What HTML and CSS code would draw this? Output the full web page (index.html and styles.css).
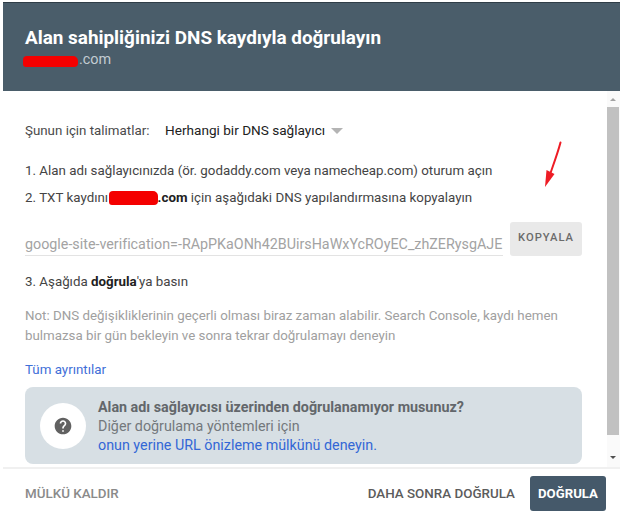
FILE: index.html
```html
<!DOCTYPE html>
<html lang="tr">
<head>
<meta charset="utf-8">
<title>Alan sahipliğinizi DNS kaydıyla doğrulayın</title>
<link rel="stylesheet" href="styles.css">
</head>
<body>
<div class="dialog">
  <header class="head">
    <h1 class="title">Alan sahipliğinizi DNS kaydıyla doğrulayın</h1>
    <div class="sub"><span class="redact redact-sub"></span>.com</div>
  </header>
  <div class="middle">
    <main class="content">
      <div class="instr">
        <span class="instr-label">Şunun için talimatlar:</span>
        <span class="instr-value">Herhangi bir DNS sağlayıcı</span>
        <span class="caret"></span>
      </div>
      <p class="step step-1">1. Alan adı sağlayıcınızda (ör. godaddy.com veya namecheap.com) oturum açın</p>
      <p class="step step-2">2. TXT kaydını <span class="redact redact-inline"></span><b>.com</b> için aşağıdaki DNS yapılandırmasına kopyalayın</p>
      <div class="copy-row">
        <div class="token">google-site-verification=-RApPKaONh42BUirsHaWxYcROyEC_zhZERysgAJE</div>
        <button class="copy-btn">KOPYALA</button>
      </div>
      <p class="step step-3">3. Aşağıda <b>doğrula</b>'ya basın</p>
      <p class="note">Not: DNS değişikliklerinin geçerli olması biraz zaman alabilir. Search Console, kaydı hemen bulmazsa bir gün bekleyin ve sonra tekrar doğrulamayı deneyin</p>
      <a class="details">Tüm ayrıntılar</a>
      <section class="help">
        <div class="help-circle">
          <svg width="20" height="20" viewBox="0 0 24 24"><path fill="#616161" d="M12 2C6.48 2 2 6.48 2 12s4.48 10 10 10 10-4.48 10-10S17.52 2 12 2zm1 17h-2v-2h2v2zm2.07-7.75l-.9.92C13.45 12.9 13 13.5 13 15h-2v-.5c0-1.1.45-2.1 1.17-2.83l1.24-1.26c.37-.36.59-.86.59-1.41 0-1.1-.9-2-2-2s-2 .9-2 2H8c0-2.21 1.79-4 4-4s4 1.79 4 4c0 .88-.36 1.68-.93 2.25z"/></svg>
        </div>
        <div class="help-text">
          <div class="help-title">Alan adı sağlayıcısı üzerinden doğrulanamıyor musunuz?</div>
          <div class="help-line">Diğer doğrulama yöntemleri için</div>
          <a class="help-link">onun yerine URL önizleme mülkünü deneyin.</a>
        </div>
      </section>
    </main>
    <div class="scrollbar">
      <span class="arrow arrow-up"></span>
      <span class="thumb"></span>
      <span class="arrow arrow-down"></span>
    </div>
    <svg class="red-arrow" width="24" height="48" viewBox="0 0 24 48"><path d="M18.500 2.500 C16 12 12 23 8.500 33" stroke="#ee1c25" stroke-width="2" fill="none" stroke-linecap="round"/><path d="M3 47 L4.500 30 L12.500 34 Z" fill="#ee1c25"/></svg>
  </div>
  <footer class="foot">
    <button class="ghost remove">MÜLKÜ KALDIR</button>
    <button class="ghost later">DAHA SONRA DOĞRULA</button>
    <button class="verify">DOĞRULA</button>
  </footer>
</div>
</body>
</html>
```
FILE: styles.css
```css
* { box-sizing: border-box; }
html, body { margin: 0; padding: 0; background: #fff; }
body { width: 626px; height: 519px; overflow: hidden; font-family: Roboto, "Liberation Sans", sans-serif; }
.dialog { width: 617px; margin-left: 3px; padding-top: 2px; display: flex; flex-direction: column; }
.head { height: 89px; background: #4a5d6a; border-top: 1px solid #2f3d47; padding: 22px 22px 0; }
.title { margin: 0; font-size: 18.900px; line-height: 25px; font-weight: 700; color: #fff; }
.sub { font-size: 14.400px; line-height: 20px; color: #c3ccd2; display: flex; align-items: center; }
.redact { display: inline-block; background: #f40000; border-radius: 4px 5px 4px 3px; }
.redact-sub { width: 55px; height: 11px; margin: 2px 1px 0 -2px; }
.redact-inline { width: 49px; height: 14px; margin-left: -3px; vertical-align: -3px; }
.middle { position: relative; height: 376px; display: flex; }
.content { width: 604px; padding: 29px 25px 0 22px; color: #3c4043; font-size: 13.330px; }
.instr { display: flex; align-items: center; height: 20px; }
.instr-label { color: #4a4a4a; width: 140px; }
.instr-value { color: #212121; font-size: 13.600px; }
.caret { width: 0; height: 0; margin: 1px 0 0 6px; border-left: 6px solid transparent; border-right: 6px solid transparent; border-top: 6px solid #b4b4b4; }
.step { margin: 0; line-height: 20px; color: #444; }
.step b { color: #212121; }
.step-1 { margin-top: 21px; }
.step-2 { margin-top: 7px; word-spacing: 0.100px; }
.copy-row { display: flex; align-items: flex-start; margin-top: 14px; gap: 7px; }
.token { width: 478px; height: 25px; line-height: 26px; margin-top: 9px; color: #a3a3a3; border-bottom: 1px solid #e3e3e3; white-space: nowrap; overflow: hidden; font-size: 14.300px; }
.copy-btn { width: 72px; height: 34px; border: 0; border-radius: 3px; background: #e9e9e9; color: #6b6b6b; font: 500 11.200px Roboto, sans-serif; letter-spacing: 1px; padding: 0 0 3px; }
.step-3 { margin-top: 16px; }
.note { margin: 14px 0 0; line-height: 20px; color: #a0a0a0; font-size: 13.330px; }
.details { display: block; margin-top: 14px; line-height: 20px; color: #3f6fd8; font-size: 13.330px; }
.help { display: flex; align-items: center; height: 77px; margin-top: 7px; border-radius: 8px; background: #d7dfe4; padding-left: 15px; width: 557px; }
.help-circle { width: 46px; height: 46px; border-radius: 50%; background: #fff; display: flex; align-items: center; justify-content: center; flex: none; }
.help-text { margin-left: 12px; padding-top: 1px; line-height: 19px; font-size: 14.300px; color: #73787c; }
.help-title { font-weight: 700; color: #63676b; }
.help-link { color: #3367d6; display: block; }
.scrollbar { width: 13px; display: flex; flex-direction: column; align-items: flex-start; background: #fafafa; height: 376px; }
.thumb { width: 12px; height: 328px; background: #c1c1c1; margin-top: 6px; }
.arrow { width: 0; height: 0; margin-left: 3px; border-left: 3px solid transparent; border-right: 3px solid transparent; }
.arrow-up { margin-top: 7px; border-bottom: 3px solid #a3a3a3; }
.arrow-down { margin-top: 21px; border-top: 3px solid #505050; }
.red-arrow { position: absolute; left: 539px; top: 49px; }
.foot { display: flex; align-items: center; height: 50px; border-top: 2px solid #f0f0f0; padding: 0 14px 0 22px; }
.ghost { border: 0; background: none; padding: 0; font: 500 13.400px Roboto, sans-serif; }
.remove { color: #8a8a8a; }
.later { color: #5c5c5c; margin-left: auto; }
.verify { margin-left: 15px; width: 76px; height: 35px; border: 0; border-radius: 3px; background: #45596a; color: #fff; font: 700 13.200px Roboto, sans-serif; padding: 0; }
```
